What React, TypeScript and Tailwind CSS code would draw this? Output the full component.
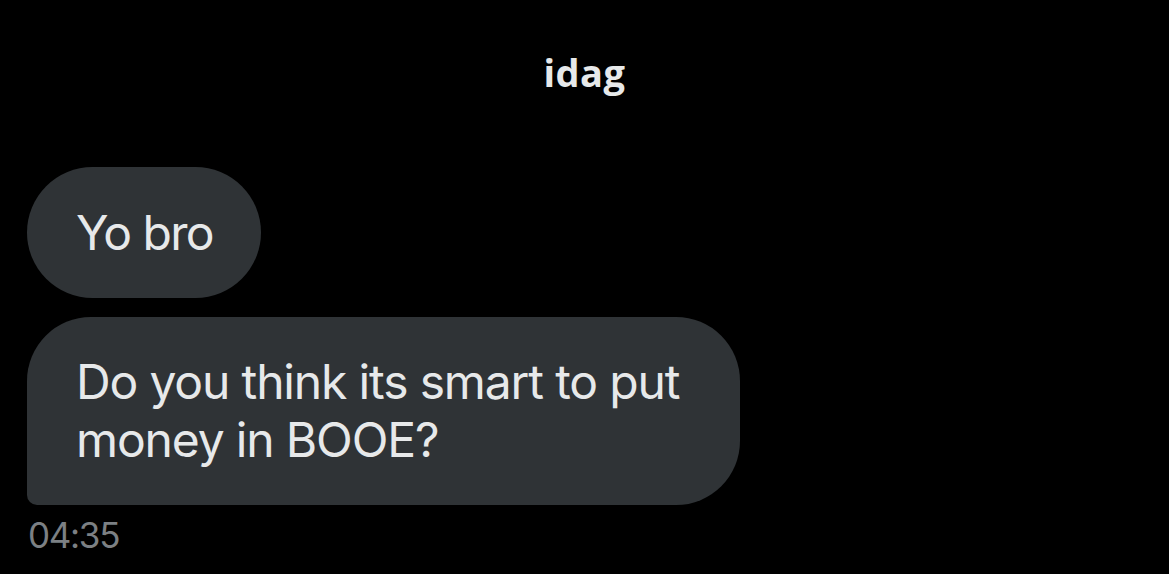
export default function App() {
    return (
        <div className="min-h-[574px] w-full bg-black font-['Inter',sans-serif] text-[#e7e9ea]">
            {/* Conversation header */}
            <header className="flex justify-center pt-[50px]">
                <h1 className="text-[38px] font-bold leading-[44px] tracking-[0.5px] font-['Open_Sans',sans-serif]">idag</h1>
            </header>

            {/* Messages */}
            <div className="flex flex-col items-start gap-[19px] pl-[27px] pt-[73px]">
                <div className="flex h-[131px] w-[234px] items-center rounded-full bg-[#2f3336] pl-[49px]">
                    <p className="text-[48px] leading-[58px] tracking-[-1.6px]">Yo bro</p>
                </div>
                <div className="w-[713px] rounded-[64px] rounded-bl-[10px] bg-[#2f3336] pl-[49px] pr-[40px] pt-[36px] pb-[36px]">
                    <p className="text-[48px] leading-[58px] tracking-[-1.15px]">
                        Do you think its smart to put
                        <br />
                        money in BOOE?
                    </p>
                </div>
            </div>
            <p className="mt-[8px] pl-[28px] text-[35px] leading-[44px] tracking-[-1.3px] text-[#7c8084]">04:35</p>
        </div>
    );
}
